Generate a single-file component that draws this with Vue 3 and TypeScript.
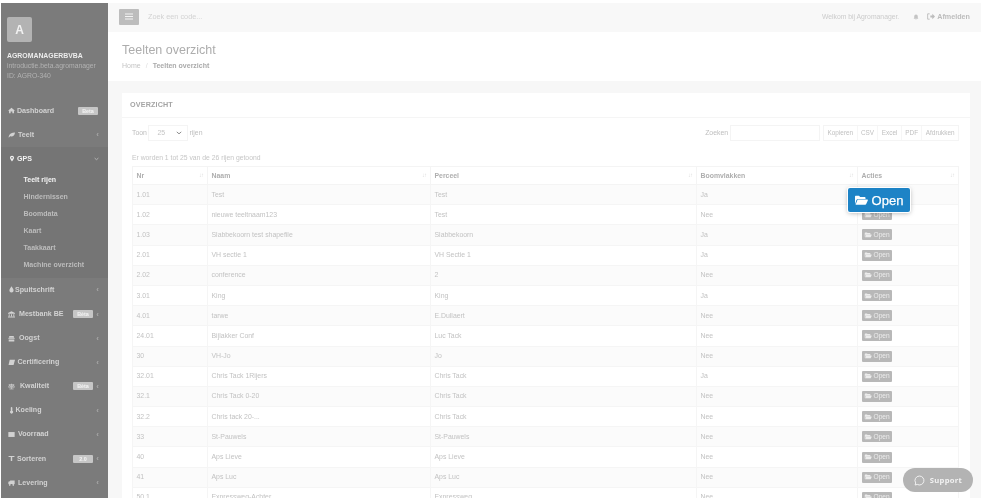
<script setup lang="ts">
interface Row { nr: string; naam: string; perceel: string; boom: string }
const rows: Row[] = [
  { nr: '1.01', naam: 'Test', perceel: 'Test', boom: 'Ja' },
  { nr: '1.02', naam: 'nieuwe teeltnaam123', perceel: 'Test', boom: 'Nee' },
  { nr: '1.03', naam: 'Slabbekoorn test shapefile', perceel: 'Slabbekoorn', boom: 'Ja' },
  { nr: '2.01', naam: 'VH sectie 1', perceel: 'VH Sectie 1', boom: 'Ja' },
  { nr: '2.02', naam: 'conference', perceel: '2', boom: 'Nee' },
  { nr: '3.01', naam: 'King', perceel: 'King', boom: 'Ja' },
  { nr: '4.01', naam: 'tarwe', perceel: 'E.Dullaert', boom: 'Nee' },
  { nr: '24.01', naam: 'Bijlakker Conf', perceel: 'Luc Tack', boom: 'Nee' },
  { nr: '30', naam: 'VH-Jo', perceel: 'Jo', boom: 'Nee' },
  { nr: '32.01', naam: 'Chris Tack 1Rijers', perceel: 'Chris Tack', boom: 'Ja' },
  { nr: '32.1', naam: 'Chris Tack 0-20', perceel: 'Chris Tack', boom: 'Nee' },
  { nr: '32.2', naam: 'Chris tack 20-...', perceel: 'Chris Tack', boom: 'Nee' },
  { nr: '33', naam: 'St-Pauwels', perceel: 'St-Pauwels', boom: 'Nee' },
  { nr: '40', naam: 'Aps Lieve', perceel: 'Aps Lieve', boom: 'Nee' },
  { nr: '41', naam: 'Aps Luc', perceel: 'Aps Luc', boom: 'Nee' },
  { nr: '50.1', naam: 'Expressweg-Achter', perceel: 'Expressweg', boom: 'Nee' },
]
const folder = 'M1 9.5V1.8C1 1.2 1.4.8 2 .8h3L6.2 2h4.3c.6 0 1 .4 1 1v1H4.4c-.9 0-1.6.4-2 1.1zM3.3 5.2c.2-.4.6-.6 1-.6h8.9c.5 0 .8.5.6 1l-1.6 3.5c-.2.4-.6.6-1 .6H1.6z'
interface Nav { label: string; icon: string; x: number; badge?: string; arrow?: boolean }
const navTop: Nav[] = [
  { label: 'Dashboard', icon: 'home', x: 16, badge: 'Beta' },
  { label: 'Teelt', icon: 'leaf', x: 17, arrow: true },
]
const navBottom: Nav[] = [
  { label: 'Spuitschrift', icon: 'drop', x: 14, arrow: true },
  { label: 'Mestbank BE', icon: 'bank', x: 18, badge: 'Bèta', arrow: true },
  { label: 'Oogst', icon: 'box', x: 18, arrow: true },
  { label: 'Certificering', icon: 'book', x: 16.5, arrow: true },
  { label: 'Kwaliteit', icon: 'scale', x: 19, badge: 'Bèta', arrow: true },
  { label: 'Koeling', icon: 'thermo', x: 14.5, arrow: true },
  { label: 'Voorraad', icon: 'list', x: 17, arrow: true },
  { label: 'Sorteren', icon: 'filter', x: 16, badge: '2.0', arrow: true },
  { label: 'Levering', icon: 'truck', x: 17, arrow: true },
]
const sub = ['Teelt rijen', 'Hindernissen', 'Boomdata', 'Kaart', 'Taakkaart', 'Machine overzicht']
const icons: Record<string, string> = {
  home: 'M5 1 0 5.5h1.4V9h2.4V6.4h2.4V9h2.4V5.5H10z',
  leaf: 'M1 8C2 4 5 2 10 2 9.5 6 7 8.5 3 7.5L1 9.5z',
  drop: 'M5 0.5C6.5 3 8 4.5 8 6.3A3 3 0 0 1 2 6.3C2 4.5 3.5 3 5 0.5z',
  bank: 'M5 0.5 0 3v1h10V3zM1 4.6h1.4v3H1zM4.3 4.6h1.4v3H4.3zM7.6 4.6H9v3H7.6zM0 8h10v1.4H0z',
  box: 'M2 1.5h6L9 4H1zM.5 4.8h9v1H.5zM1 6.4h8v2.8H1z',
  book: 'M2.5 1H10L8 8.5H0.8z',
  scale: 'M5 1v7.5M2 8.5h6M1 2.5h8M2.5 2.5 .8 6h3.4zM7.5 2.5 5.8 6h3.4z',
  thermo: 'M4 1.2A1.1 1.1 0 0 1 6.2 1.2V5.4A2.1 2.1 0 1 1 4 5.4z',
  list: 'M.5 1.5h9v7h-9z',
  filter: 'M.8 1.5h8.4v1.5H6v5.5H4V3H.8z',
  truck: 'M3 2h6.5v5H3zM.5 4 3 3v4H.5zM2.5 7.2a1.2 1.2 0 1 0 .01 0zM7.5 7.2a1.2 1.2 0 1 0 .01 0z',
}
const strokeIcons = new Set(['scale'])
const iconGap = (n: Nav) => `${n.x - 14}px`
</script>

<template>
  <div class="page">
    <aside class="sidebar">
      <div class="profile">
        <div class="avatar">A</div>
        <div class="company">AGROMANAGERBVBA</div>
        <div class="muted">introductie.beta.agromanager</div>
        <div class="muted">ID: AGRO-340</div>
      </div>
      <nav class="nav">
        <a v-for="n in navTop" :key="n.label" class="nav-item">
          <svg class="nav-icon" :style="{ marginRight: iconGap(n) }" viewBox="0 0 10 10"><path :d="icons[n.icon]" /></svg>
          <span class="nav-label">{{ n.label }}</span>
          <span v-if="n.badge" class="badge" :class="{ solo: !n.arrow }">{{ n.badge }}</span>
          <span v-if="n.arrow" class="arrow">‹</span>
        </a>
        <div class="open-group">
          <a class="nav-item active">
            <svg class="nav-icon pin" viewBox="0 0 10 10"><path d="M5 .4a3.4 3.4 0 0 0-3.4 3.4C1.6 6 5 9.8 5 9.8S8.4 6 8.4 3.8A3.4 3.4 0 0 0 5 .4zm0 4.8a1.4 1.4 0 1 1 0-2.8 1.4 1.4 0 0 1 0 2.8z" /></svg>
            <span class="nav-label">GPS</span>
            <svg class="chev" viewBox="0 0 8 5"><path d="M1 1l3 2.6L7 1" /></svg>
          </a>
          <a v-for="(s, i) in sub" :key="s" class="sub-item" :class="{ current: i === 0 }">{{ s }}</a>
        </div>
        <a v-for="n in navBottom" :key="n.label" class="nav-item">
          <svg class="nav-icon" :class="{ stroked: strokeIcons.has(n.icon) }" :style="{ marginRight: iconGap(n) }" viewBox="0 0 10 10"><path :d="icons[n.icon]" /></svg>
          <span class="nav-label">{{ n.label }}</span>
          <span v-if="n.badge" class="badge">{{ n.badge }}</span>
          <span v-if="n.arrow" class="arrow">‹</span>
        </a>
      </nav>
    </aside>

    <main class="main">
      <header class="topbar">
        <button class="menu-btn" type="button">
          <svg viewBox="0 0 8 7" width="8" height="7"><path d="M0 .5h8v1H0zM0 3h8v1H0zM0 5.5h8v1H0z" /></svg>
        </button>
        <span class="search">Zoek een code...</span>
        <span class="welcome">Welkom bij Agromanager.</span>
        <svg class="bell" viewBox="0 0 10 10"><path d="M5 1a3 3 0 0 0-3 3v2.6L1 8h8L8 6.6V4a3 3 0 0 0-3-3zM4 8.6h2L5 9.8z" /></svg>
        <span class="logout">
          <svg viewBox="0 0 12 10" width="8" height="7"><path d="M4 1H1v8h3" fill="none" stroke="currentColor" stroke-width="1.4" /><path d="M5 3.4h3V1l4 4-4 4V6.6H5z" /></svg>
          Afmelden
        </span>
      </header>

      <section class="heading">
        <h1>Teelten overzicht</h1>
        <div class="crumbs"><span>Home</span><i>/</i><b>Teelten overzicht</b></div>
      </section>

      <section class="content">
        <div class="card">
          <div class="card-title">OVERZICHT</div>
          <div class="card-body">
            <div class="controls">
              <div class="length">
                Toon
                <span class="select">25
                  <svg viewBox="0 0 8 5" width="6" height="4"><path d="M1 1l3 2.6L7 1" fill="none" stroke="#8a8a8a" stroke-width="1.3" /></svg>
                </span>
                rijen
              </div>
              <div class="find">
                Zoeken
                <span class="find-input"></span>
                <div class="exports">
                  <span>Kopieren</span><span>CSV</span><span>Excel</span><span>PDF</span><span>Afdrukken</span>
                </div>
              </div>
            </div>
            <div class="info">Er worden 1 tot 25 van de 26 rijen getoond</div>
            <div class="table-wrap">
              <table>
                <colgroup>
                  <col class="c1" /><col class="c2" /><col class="c3" /><col class="c4" /><col />
                </colgroup>
                <thead>
                  <tr>
                    <th v-for="h in ['Nr', 'Naam', 'Perceel', 'Boomvlakken', 'Acties']" :key="h">
                      <span>{{ h }}</span><em>↓↑</em>
                    </th>
                  </tr>
                </thead>
                <tbody>
                  <tr v-for="(r, i) in rows" :key="r.nr" :class="{ odd: i % 2 === 0 }">
                    <td>{{ r.nr }}</td>
                    <td>{{ r.naam }}</td>
                    <td>{{ r.perceel }}</td>
                    <td>{{ r.boom }}</td>
                    <td>
                      <span class="open-btn">
                        <svg viewBox="0 0 14 11" width="8" height="6"><path :d="folder" /></svg>
                        Open
                      </span>
                    </td>
                  </tr>
                </tbody>
              </table>
              <span class="open-big">
                <svg viewBox="0 0 14 11" width="14" height="11"><path :d="folder" /></svg>
                Open
              </span>
            </div>
          </div>
        </div>
      </section>
    </main>
    <div class="support">
      <svg viewBox="0 0 16 16" width="11" height="11"><path d="M8 1.5a6.5 6.5 0 1 1-3.2 12.2L1.6 14.6l.9-3A6.5 6.5 0 0 1 8 1.5z" /></svg>
      Support
    </div>
  </div>
</template>

<style>
html, body { margin: 0; overflow: hidden; background: #fff; }
</style>

<style scoped>
.page {
  width: 981px; height: 498px; display: flex; overflow: hidden; position: relative;
  font-family: "Liberation Sans", sans-serif; filter: blur(0.55px);
  background: #fff; color: #b4b4b4; padding-top: 3px; box-sizing: border-box;
}
.sidebar {
  width: 107px; flex: none; margin-left: 1px; background: #7b7b7b; color: #c9c9c9; height: 495px; overflow: hidden;
}
.profile { padding: 14px 0 0 6px; height: 93px; box-sizing: border-box; }
.avatar {
  width: 25px; height: 25px; border-radius: 2px; background: #b3b3b3; color: #f2f2f2;
  font: 700 12px "Liberation Sans", sans-serif; display: flex; align-items: center; justify-content: center;
  margin: 0 0 9px 0;
}
.company { font: 700 6.9px/10px "Liberation Sans", sans-serif; color: #ececec; }
.muted { font: 400 6.8px/10px "Liberation Sans", sans-serif; color: #b2b2b2; }
.nav { display: flex; flex-direction: column; padding-top: 2.6px; }
.nav-item { height: 24.1px; display: flex; align-items: center; padding: 0 9px 0 6px; font-size: 7.1px; font-weight: 700; color: #d2d2d2; white-space: nowrap; }
.nav-icon { width: 7px; height: 7px; fill: currentColor; flex: none; margin-left: 1px; }
.nav-icon.pin { width: 6px; margin-left: 2px; margin-right: 2px; }
.nav-icon.stroked { fill: none; stroke: currentColor; stroke-width: 1; }
.nav-label { flex: 1; }
.badge {
  background: #c6c6c6; color: #f4f4f4; font-size: 5.4px; font-weight: 700; line-height: 8px; text-align: center;
  width: 20px; border-radius: 1px; height: 8px; margin-right: 2px;
}
.badge.solo { margin-right: 1px; }
.arrow { width: 4px; text-align: right; font-size: 8px; color: #a8a8a8; }
.open-group { background: #757575; padding-bottom: 5px; }
.nav-item.active { color: #f2f2f2; }
.chev { width: 5px; height: 4px; fill: none; stroke: #c0c0c0; stroke-width: 1.3; }
.sub-item { display: block; height: 17px; line-height: 17px; padding-left: 22.5px; font-size: 7px; font-weight: 700; color: #bcbcbc; }
.sub-item.current { color: #f4f4f4; }
.main { flex: 1; min-width: 0; display: flex; flex-direction: column; }
.topbar {
  height: 29px; flex: none; background: #f8f8f8; display: flex; align-items: center; padding: 0 11px 2px 11px; box-sizing: border-box; font-size: 6.8px;
  color: #c9c9c9;
}
.menu-btn {
  width: 20px; height: 16px; border: 0; border-radius: 1px; background: #bdbdbd; display: flex; align-items: center; justify-content: center; padding: 0; fill: #f4f4f4;
}
.search { margin-left: 9px; font-size: 7.3px; flex: 1; color: #d2d2d2; }
.welcome { color: #cbcbcb; }
.bell { width: 6px; height: 6px; fill: #c4c4c4; margin: 0 8px 0 14px; }
.logout { color: #bcbcbc; font-weight: 700; font-size: 7.2px; display: flex; align-items: center; gap: 2px; fill: currentColor; }
.heading { height: 49px; flex: none; padding: 9px 0 0 14px; box-sizing: border-box; background: #fff; }
h1 { margin: 0; font: 400 12.5px/18px "Liberation Sans", sans-serif; color: #adadad; }
.crumbs { font: 400 7px/10px "Liberation Sans", sans-serif; margin-top: 2px; color: #c4c4c4; }
.crumbs i { margin: 0 5px; font-style: normal; color: #ddd; }
.crumbs b { color: #aaa; }
.content { flex: 1; min-height: 0; background: #f7f7f7; padding: 12px 11px 0 14px; overflow: hidden; }
.card { background: #fff; height: 100%; }
.card-title { height: 25px; padding-left: 8px; font: 700 7.2px/24px "Liberation Sans", sans-serif; color: #a4a4a4; border-bottom: 1px solid #f5f5f5; box-sizing: border-box; letter-spacing: .15px; }
.card-body { padding: 7px 11px 0 10px; font: 400 6.9px/10px "Liberation Sans", sans-serif; color: #bdbdbd; }
.controls { display: flex; justify-content: space-between; height: 16px; align-items: center; }
.length { display: flex; align-items: center; gap: 1.5px; }
.find { display: flex; align-items: center; gap: 2px; }
.select { width: 39.5px; height: 16px; box-sizing: border-box; border: 1px solid #f4f4f4; display: flex; align-items: center; justify-content: space-between; padding: 0 5px 0 8px; color: #c4c4c4; }
.find-input { width: 90px; height: 16px; border: 1px solid #f4f4f4; box-sizing: border-box; margin-right: 1px; }
.exports { display: flex; border: 1px solid #f4f4f4; height: 16px; box-sizing: border-box; }
.exports span { padding: 0 3.4px; line-height: 14px; border-right: 1px solid #f6f6f6; color: #c0c0c0; font-size: 6.4px; }
.exports span:last-child { border: 0; }
.info { margin-top: 12px; height: 11px; color: #c6c6c6; font-size: 6.8px; }
.table-wrap { position: relative; margin-top: 2px; }
table { width: 827px; table-layout: fixed; border-collapse: collapse; font: 400 6.9px/10px "Liberation Sans", sans-serif; color: #c2c2c2; }
.c1 { width: 75px; } .c2 { width: 223px; } .c3 { width: 266px; } .c4 { width: 161px; }
th { height: 17px; padding: 0 3.5px; text-align: left; border: 1px solid #f4f4f4; font-weight: 700; color: #aeaeae; position: relative; }
th em { position: absolute; right: 4px; top: 4px; font: 400 6px/8px "Liberation Sans", sans-serif; color: #ddd; letter-spacing: -1px; }
td { height: 19.2px; padding: 0 3.5px; border: 1px solid #f5f5f5; box-sizing: content-box; white-space: nowrap; overflow: hidden; }
tr.odd td { background: #fbfbfb; }
.open-btn { display: inline-flex; align-items: center; gap: 1.5px; background: #b8b8b8; color: #ececec; height: 11px; padding: 0 2.5px; border-radius: 1px; font-size: 6.6px; fill: #ececec; vertical-align: middle; }
.open-big {
  position: absolute; left: 715.5px; top: 22px; width: 62px; height: 24px; box-sizing: border-box; background: #1d83c6; color: #fff; fill: #fff;
  border-radius: 2px; display: flex; align-items: center; justify-content: center; gap: 4px; font: 400 13px "Liberation Sans", sans-serif; -webkit-text-stroke: .25px #fff;
  box-shadow: 0 0 0 1px #fff, 0 1px 5px rgba(0,0,0,.35);
}
.support {
  position: absolute; left: 903px; top: 468px; width: 70px; height: 24px; border-radius: 12px; background: #b3b3b3; color: #f2f2f2;
  display: flex; align-items: center; justify-content: center; gap: 5px; font: 700 7.6px "Open Sans", sans-serif; letter-spacing: .3px;
}
.support svg { fill: none; stroke: #f2f2f2; stroke-width: 1.4; }
</style>
